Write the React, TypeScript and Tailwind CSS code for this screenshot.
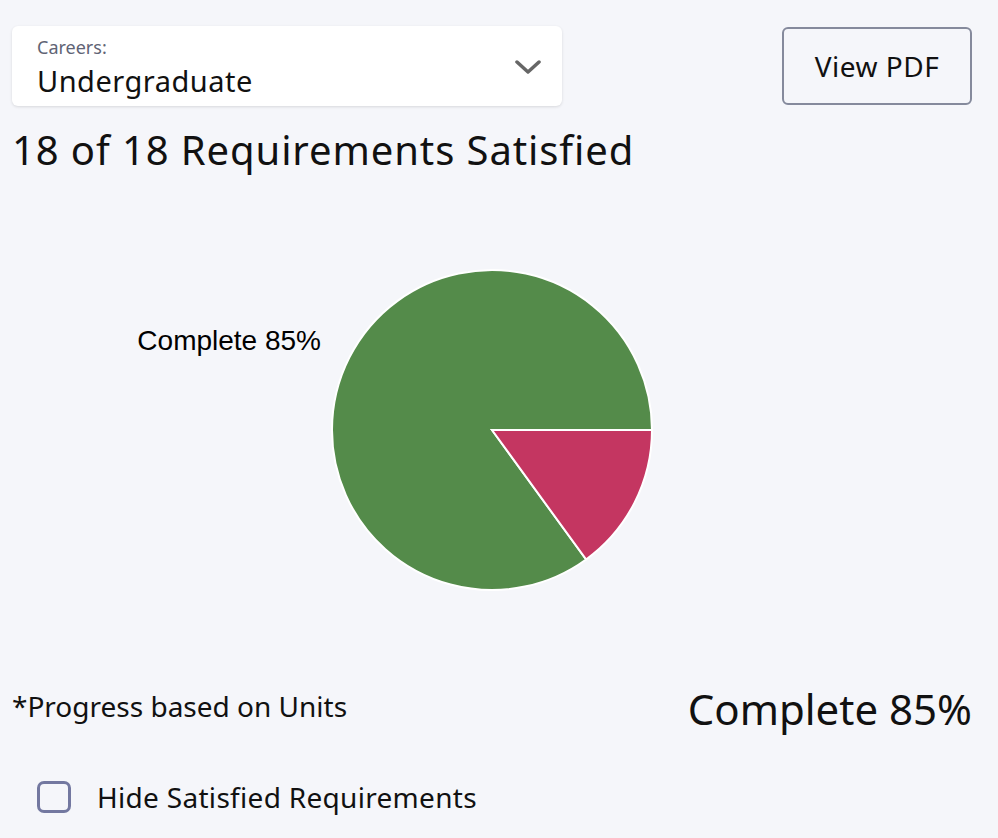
import React from "react";

const font = { fontFamily: '"Noto Sans", "Open Sans", sans-serif' };

function Pie() {
  const cx = 492;
  const cy = 241;
  const r = 160;
  const a = 0.15 * 2 * Math.PI;
  const ex = cx + r * Math.cos(a);
  const ey = cy + r * Math.sin(a);
  const red = `M ${cx} ${cy} L ${cx + r} ${cy} A ${r} ${r} 0 0 1 ${ex} ${ey} Z`;
  const green = `M ${cx} ${cy} L ${ex} ${ey} A ${r} ${r} 0 1 1 ${cx + r} ${cy} Z`;
  return (
    <svg width="974" height="480" viewBox="0 0 974 480" className="block">
      <path d={green} fill="#548b4a" stroke="#ffffff" strokeWidth="2" />
      <path d={red} fill="#c43661" stroke="#ffffff" strokeWidth="2" />
      <text
        x="321"
        y="161"
        textAnchor="end"
        fontSize="28"
        fill="#000"
        style={{ fontFamily: '"Liberation Sans", Arial, sans-serif' }}
      >
        Complete 85%
      </text>
    </svg>
  );
}

export default function App() {
  return (
    <div className="w-[998px] h-[838px] bg-[#f5f6fa] pl-3 pr-[26px] text-black overflow-hidden" style={font}>
      <div className="flex items-start justify-between pt-[26px]">
        <div className="w-[550px] h-[80px] bg-white rounded-[6px] shadow-[0_1px_3px_rgba(0,0,0,0.12)] flex items-start justify-between pl-[25px] pr-[21px] pt-[10px]">
          <div className="flex flex-col">
            <span className="text-[18px] leading-[22px] text-[#5f6475]">Careers:</span>
            <span className="mt-[5px] text-[29px] leading-[36px] tracking-[0.5px] text-[#111]">Undergraduate</span>
          </div>
          <svg width="26" height="14" viewBox="0 0 26 14" className="mt-[24px]">
            <path d="M2 2 L13 12 L24 2" fill="none" stroke="#666" strokeWidth="3.5" strokeLinecap="round" strokeLinejoin="round" />
          </svg>
        </div>
        <button className="mt-[1px] w-[190px] h-[78px] border-2 border-[#858a9c] rounded-[6px] text-[28px] tracking-[0.5px] text-[#111] flex items-center justify-center bg-transparent">
          View PDF
        </button>
      </div>
      <h1 className="mt-[18px] text-[40px] leading-[52px] tracking-[0.9px] text-[#111] font-normal">18 of 18 Requirements Satisfied</h1>
      <div className="-ml-3 mt-[13px]">
        <Pie />
      </div>
      <div className="flex items-end justify-between mt-[10px]">
        <span className="text-[28px] leading-[38px] text-[#111] mb-[8px]">*Progress based on Units</span>
        <span className="text-[42px] leading-[54px] text-[#111] translate-y-[3px]">Complete 85%</span>
      </div>
      <label className="flex items-center mt-[46px] pl-[25px]">
        <span className="w-[34px] h-[32px] border-[3px] border-[#7378a0] rounded-[7px] bg-transparent"></span>
        <span className="ml-[26px] text-[28px] leading-[36px] tracking-[0.3px] text-[#111]">Hide Satisfied Requirements</span>
      </label>
    </div>
  );
}
